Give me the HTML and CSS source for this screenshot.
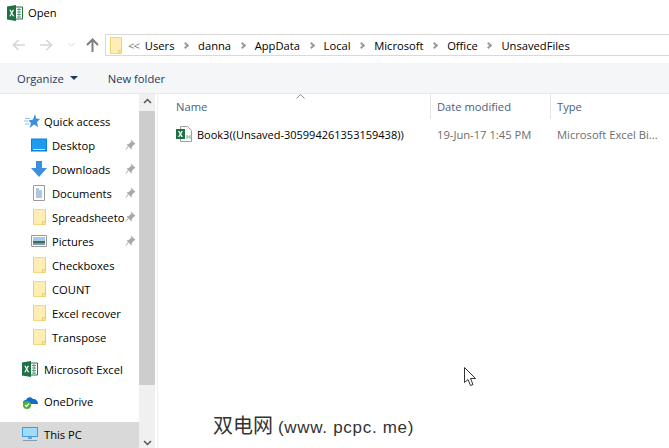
FILE: index.html

```html
<!DOCTYPE html>
<html lang="en">
<head>
  <meta charset="UTF-8">
  <title>Open</title>
  <link rel="stylesheet" href="styles.css">
</head>
<body>
  <svg class="defs" width="0" height="0">
    <symbol id="folder" viewBox="0 0 13 20" preserveAspectRatio="none">
      <path d="M.5.5h12v19H.5z" fill="#fde48f" stroke="#eccb5c"/>
      <path d="M1 1h11v15H10v3H1z" fill="#feeeb4"/>
      <path d="M9.5 19.5v-4h3" fill="none" stroke="#eccb5c"/>
    </symbol>
    <symbol id="pin" viewBox="0 0 12 12">
      <path d="M7 .5l4.500 4.500-1.400.6-2.300 2.600-.3 2.200-5-5 2.200-.3 2.600-2.300z" fill="#a9a9a9"/>
      <path d="M3.500 7.500L.5 11.500l4-3z" fill="#b8b8b8"/>
    </symbol>
    <symbol id="excel" viewBox="0 0 16 16">
      <path d="M5 2h10.500v12H5z" fill="#fff" stroke="#1e7145"/>
      <path d="M10 4.500h4M10 7h4M10 9.500h4M10 12h4M12 3v10" stroke="#5a9a78" fill="none"/>
      <path d="M0 1.500L9 0v16L0 14.500z" fill="#1e7145"/>
      <path d="M2.300 4.800h1.500l.9 2 1-2h1.400L5.400 8l1.800 3.200H5.700l-1-2.100-1 2.100H2.300L4 8z" fill="#fff"/>
    </symbol>
  </svg>

  <div class="titlebar">
    <svg class="title-icon"><use href="#excel"/></svg>
    <span>Open</span>
  </div>

  <div class="addressrow">
    <div class="navbtns">
      <svg width="13" height="12" viewBox="0 0 13 12"><path d="M13 6H2M6.500 1L1.500 6l5 5" fill="none" stroke="#d6d6d6" stroke-width="1.600"/></svg>
      <svg width="13" height="12" viewBox="0 0 13 12"><path d="M0 6h11M6.500 1l5 5-5 5" fill="none" stroke="#d6d6d6" stroke-width="1.600"/></svg>
      <svg width="7" height="5" viewBox="0 0 7 5"><path d="M.5 1l3 3 3-3" fill="none" stroke="#d6d6d6"/></svg>
      <svg width="13" height="14" viewBox="0 0 13 14"><path d="M6.500 14V2M1 7l5.500-5.500L12 7" fill="none" stroke="#7f7f7f" stroke-width="2"/></svg>
    </div>
    <div class="addressbar">
      <svg class="addr-folder"><use href="#folder"/></svg>
      <span class="more">&lt;&lt;</span>
      <span>Users</span><i class="sep"></i>
      <span>danna</span><i class="sep"></i>
      <span>AppData</span><i class="sep"></i>
      <span>Local</span><i class="sep"></i>
      <span>Microsoft</span><i class="sep"></i>
      <span>Office</span><i class="sep"></i>
      <span>UnsavedFiles</span>
    </div>
  </div>

  <div class="toolbar">
    <span class="organize">Organize<i class="caret"></i></span>
    <span>New folder</span>
  </div>

  <div class="main">
    <nav class="sidebar">
      <div class="navitem top">
        <svg class="nav-icon star" viewBox="0 0 16 16"><path d="M11 1l1.200 4.500L16 6l-3 3 1 5-4-2.500L5.500 15 7 10 4.500 7.500 9 6.500z" fill="#3c8ee0"/><path d="M0 8h4M1 5.500h5M1 11h4" stroke="#8fc0ee" fill="none"/></svg>
        <span>Quick access</span>
      </div>
      <div class="navitem sub">
        <svg class="nav-icon" viewBox="0 0 16 13"><path d="M0 0h16v13H0z" fill="#0f7fe0"/><path d="M1 1h14v10H1z" fill="#1a9cf0"/><path d="M2 11h12" stroke="#cfeaff"/></svg>
        <span>Desktop</span><svg class="pin"><use href="#pin"/></svg>
      </div>
      <div class="navitem sub">
        <svg class="nav-icon" viewBox="0 0 16 16"><path d="M5 0h6v7h5l-8 9-8-9h5z" fill="#3c8ee0"/></svg>
        <span>Downloads</span><svg class="pin"><use href="#pin"/></svg>
      </div>
      <div class="navitem sub">
        <svg class="nav-icon" viewBox="0 0 16 16"><path d="M2.500.5h11v15h-11z" fill="#fff" stroke="#9a9a9a"/><path d="M5 4h3M5 6h6M5 8h6M5 10h6M5 12h6" stroke="#5b8fc0"/></svg>
        <span>Documents</span><svg class="pin"><use href="#pin"/></svg>
      </div>
      <div class="navitem sub">
        <svg class="nav-folder"><use href="#folder"/></svg>
        <span>Spreadsheeto</span><svg class="pin"><use href="#pin"/></svg>
      </div>
      <div class="navitem sub">
        <svg class="nav-icon" viewBox="0 0 16 12"><path d="M.5.5h15v11H.5z" fill="#fff" stroke="#9a9a9a"/><path d="M2 2h12v4H2z" fill="#a9c9e8"/><path d="M2 6h12v2H2z" fill="#3f6f52"/><path d="M2 8h12v2H2z" fill="#7d9aa8"/></svg>
        <span>Pictures</span><svg class="pin"><use href="#pin"/></svg>
      </div>
      <div class="navitem sub"><svg class="nav-folder"><use href="#folder"/></svg><span>Checkboxes</span></div>
      <div class="navitem sub"><svg class="nav-folder"><use href="#folder"/></svg><span>COUNT</span></div>
      <div class="navitem sub"><svg class="nav-folder"><use href="#folder"/></svg><span>Excel recover</span></div>
      <div class="navitem sub"><svg class="nav-folder"><use href="#folder"/></svg><span>Transpose</span></div>
      <div class="navitem top group">
        <svg class="nav-icon"><use href="#excel"/></svg>
        <span>Microsoft Excel</span>
      </div>
      <div class="navitem top group">
        <svg class="nav-icon" viewBox="0 0 16 16"><path d="M1 10c0-2 1-3 3-3 1-3 5-4 7-1 3 0 5 2 5 5H3z" fill="#0f6fc6"/><circle cx="5" cy="12" r="4" fill="#4caf3c"/><path d="M3 12l1.500 1.500L7 10.500" fill="none" stroke="#fff" stroke-width="1.200"/></svg>
        <span>OneDrive</span>
      </div>
      <div class="navitem top group selected">
        <svg class="nav-icon" viewBox="0 0 16 16"><path d="M0 1h16v10H0z" fill="#3f9fe0"/><path d="M1 2h14v8H1z" fill="#9fdcfb"/><path d="M6 11h4v2H6zM1 14h14v1H1z" fill="#7f9fb5"/></svg>
        <span>This PC</span>
      </div>
    </nav>

    <div class="scrollbar">
      <svg class="arrow" width="9" height="6" viewBox="0 0 9 6"><path d="M1 5l3.500-3.500L8 5" fill="none" stroke="#555" stroke-width="1.500"/></svg>
      <div class="thumb"></div>
      <svg class="arrow end" width="9" height="6" viewBox="0 0 9 6"><path d="M1 1l3.500 3.500L8 1" fill="none" stroke="#555" stroke-width="1.500"/></svg>
    </div>

    <section class="files">
      <div class="fileheader">
        <div class="col col-name">Name</div>
        <div class="col col-date">Date modified</div>
        <div class="col col-type">Type</div>
      </div>
      <div class="filerow">
        <div class="col col-name namecell">
          <svg class="file-icon" viewBox="0 0 16 16"><path d="M4.500.5h7l4 4v11h-11z" fill="#fff" stroke="#a0a0a0"/><path d="M0 3h9v10H0z" fill="#1e7145"/><path d="M2 5h1.400l1 1.700 1-1.700h1.400L5.200 8l1.700 3H5.400l-1-1.800-1 1.800H2L3.700 8z" fill="#fff"/><path d="M11 9v4M14 9v4M11 11h3" stroke="#7db899"/></svg>
          <span>Book3((Unsaved-305994261353159438))</span>
        </div>
        <div class="col col-date muted">19-Jun-17 1:45 PM</div>
        <div class="col col-type muted">Microsoft Excel Bi...</div>
      </div>
    </section>
  </div>

  <svg class="sortcaret" width="9" height="5" viewBox="0 0 9 5"><path d="M.5 4.500l4-4 4 4" fill="none" stroke="#8a8a8a"/></svg>
  <svg class="cursor" width="13" height="20" viewBox="0 0 13 20"><path d="M.5.5v15l3.500-3 2.500 6 2.500-1-2.500-6h5z" fill="#fff" stroke="#333"/></svg>
  <div class="watermark">双电网<span class="watermark-url">(www. pcpc. me)</span></div>
</body>
</html>
```

FILE: styles.css

```css
* {
  box-sizing: border-box;
}
html, body {
  height: 100%;
}
body {
  margin: 0;
  overflow: hidden;
  display: flex;
  flex-direction: column;
  background-color: white;
  color: #000;
  font-family: "Open Sans", "Noto Sans", sans-serif;
  font-size: 11.2px;
}
.defs {
  position: absolute;
}
.titlebar {
  height: 30px;
  display: flex;
  align-items: flex-start;
  gap: 5px;
  padding: 5px 0 0 7px;
  flex-shrink: 0;
}
.title-icon {
  width: 16px;
  height: 16px;
}
.addressrow {
  height: 33px;
  display: flex;
  flex-shrink: 0;
  padding-top: 4px;
}
.navbtns {
  width: 105px;
  height: 21px;
  padding-left: 12px;
  display: flex;
  align-items: center;
  gap: 15px;
}
.navbtns svg:nth-child(4) {
  margin-left: -4px;
}
.addressbar {
  flex: 1;
  height: 22px;
  border: 1px solid #d9d9d9;
  border-right: none;
  display: flex;
  align-items: center;
  padding-left: 4px;
}
.addr-folder {
  width: 12px;
  height: 17px;
  margin-right: 6px;
}
.more {
  color: #777;
  margin-right: 6px;
  letter-spacing: -1px;
}
.sep {
  width: 5px;
  height: 5px;
  margin: 0 10px 0 8.6px;
  border-top: 2px solid #9a9a9a;
  border-right: 2px solid #9a9a9a;
  transform: rotate(45deg);
}
.toolbar {
  height: 31px;
  flex-shrink: 0;
  background-color: #f5f6f7;
  border-bottom: 1px solid #e8e9ea;
  display: flex;
  align-items: center;
  gap: 30px;
  padding: 0 0 0 17px;
  color: #1e395b;
}
.organize {
  display: flex;
  align-items: center;
  gap: 6px;
}
.caret {
  width: 0;
  height: 0;
  border-left: 4px solid transparent;
  border-right: 4px solid transparent;
  border-top: 4px solid #1e395b;
}
.main {
  flex: 1;
  display: flex;
  min-height: 0;
}
.sidebar {
  width: 139px;
  flex-shrink: 0;
  padding-top: 15px;
}
.navitem {
  height: 24px;
  display: flex;
  align-items: center;
  white-space: nowrap;
  position: relative;
}
.navitem.top {
  padding-left: 22px;
}
.navitem.sub {
  padding-left: 31px;
}
.navitem.group {
  margin-top: 8px;
}
.navitem.selected {
  background-color: #d9d9d9;
  margin-top: 9px;
  height: 26px;
  padding-bottom: 2px;
}
.nav-icon {
  width: 16px;
  height: 16px;
  margin-right: 6px;
  flex-shrink: 0;
}
.nav-icon.star {
  margin-left: 2px;
  margin-right: 4px;
}
.navitem.sub .nav-icon {
  margin-right: 5px;
}
.nav-folder {
  width: 13px;
  height: 16px;
  margin: 0 6px 0 2px;
  flex-shrink: 0;
}
.pin {
  width: 12px;
  height: 12px;
  position: absolute;
  left: 124px;
  top: 6px;
}
.scrollbar {
  width: 16px;
  flex-shrink: 0;
  background-color: #f0f0f0;
  display: flex;
  flex-direction: column;
  align-items: center;
  padding-top: 4px;
}
.arrow {
  flex-shrink: 0;
}
.arrow.end {
  margin-top: auto;
  margin-bottom: 2px;
}
.thumb {
  width: 100%;
  height: 274px;
  margin-top: 7px;
  background-color: #cdcdcd;
}
.files {
  flex: 1;
  min-width: 0;
  margin-left: 2px;
  border-left: 1px solid #f0f0f0;
}
.fileheader {
  height: 25px;
  display: flex;
  align-items: center;
  color: #4c607a;
}
.col {
  flex-shrink: 0;
  white-space: nowrap;
  padding-left: 6px;
}
.col-name {
  width: 273px;
  padding-left: 18px;
}
.col-date {
  width: 120px;
}
.col-type {
  width: 118px;
}
.fileheader .col {
  height: 25px;
  line-height: 25px;
  border-right: 1px solid #e5e5e5;
}
.fileheader .col-type {
  border-right: none;
}
.filerow {
  height: 22px;
  margin-top: 4px;
  display: flex;
  align-items: center;
}
.namecell {
  display: flex;
  align-items: center;
  gap: 5px;
  font-size: 11px;
}
.file-icon {
  width: 16px;
  height: 16px;
}
.muted {
  color: #6d6d6d;
}
.sortcaret {
  position: absolute;
  left: 296px;
  top: 94px;
}
.cursor {
  position: absolute;
  left: 464px;
  top: 367px;
}
.watermark {
  position: absolute;
  left: 213px;
  top: 410px;
  font-family: "Liberation Sans", "Noto Sans CJK SC", sans-serif;
  font-size: 20px;
  color: #333;
  white-space: nowrap;
}
.watermark-url {
  margin-left: 5px;
  font-size: 17px;
  letter-spacing: 0.7px;
}
```
